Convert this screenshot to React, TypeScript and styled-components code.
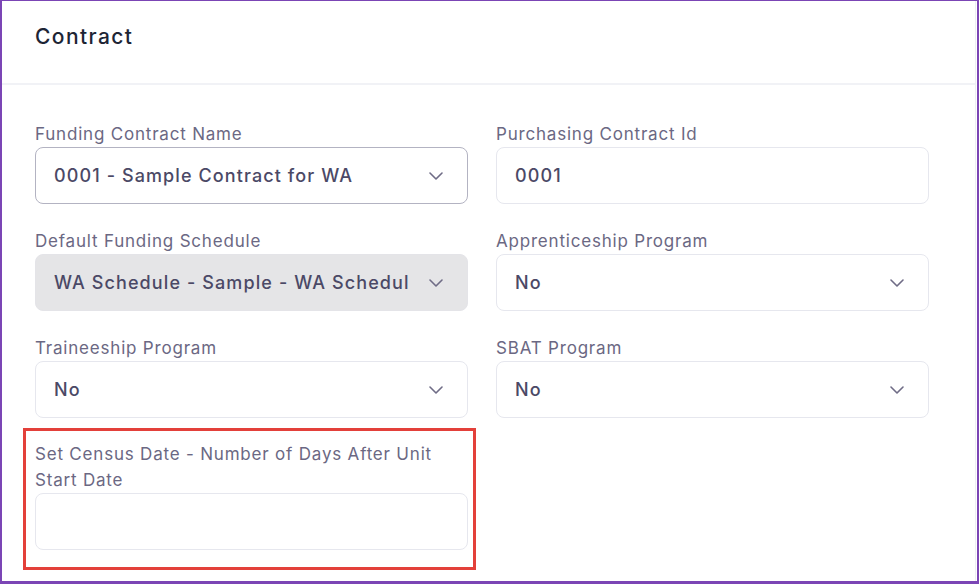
import React from 'react';
import styled, { createGlobalStyle } from 'styled-components';

const GlobalStyle = createGlobalStyle`
  html, body {
    margin: 0;
    padding: 0;
    background: #ffffff;
  }
  body {
    font-family: Inter, "Noto Sans", sans-serif;
  }
`;

const Frame = styled.div`
  box-sizing: border-box;
  width: 979px;
  height: 584px;
  border: 2px solid #7b45b5;
  border-top-width: 1px;
  border-bottom-width: 3px;
  overflow: hidden;
  background: #ffffff;
`;

const Card = styled.div`
  height: 100%;
  border-right: 1px solid #eceef2;
  margin-right: 1px;
`;

const CardHeader = styled.div`
  height: 84px;
  padding: 22px 0 0 33px;
  box-sizing: border-box;
  border-bottom: 2px solid #f1f2f6;
`;

const Title = styled.h2`
  margin: 0;
  font-size: 21px;
  font-weight: 500;
  letter-spacing: 1.4px;
  color: #1d2535;
  line-height: 28px;
`;

const Body = styled.div`
  padding: 34px 0 0 33px;
`;

const Grid = styled.div`
  display: grid;
  grid-template-columns: 433px 433px;
  column-gap: 28px;
  row-gap: 22px;
`;

const Field = styled.div`
  display: flex;
  flex-direction: column;
`;

const Highlight = styled.div`
  margin: -12px 0 0 -12px;
  padding: 8px 5px 17px 9px;
  border: 3px solid #e3403a;
  width: 453px;
  box-sizing: border-box;
`;

const Label = styled.label`
  font-size: 17px;
  letter-spacing: 0.8px;
  line-height: 26px;
  color: #6b6883;
  padding-top: 2px;
`;

const Box = styled.div<{ $disabled?: boolean; $focused?: boolean }>`
  box-sizing: border-box;
  height: 57px;
  border-radius: 8px;
  border: 1px solid ${(p) => (p.$focused ? '#b3b3c2' : p.$disabled ? '#e4e4e8' : '#e6e7ee')};
  background: ${(p) => (p.$disabled ? '#e5e5e7' : '#ffffff')};
  display: flex;
  align-items: center;
  justify-content: space-between;
  padding: 0 24px 0 18px;
`;

const Value = styled.span`
  font-size: 18px;
  font-weight: 500;
  letter-spacing: 1.1px;
  color: #4b4966;
  white-space: nowrap;
  overflow: hidden;
`;

const Chevron = () => (
  <svg width="14" height="8" viewBox="0 0 14 8" fill="none">
    <path d="M1 1l6 6 6-6" stroke="#6f6c86" strokeWidth="1.6" strokeLinecap="round" strokeLinejoin="round" />
  </svg>
);

interface FieldProps {
  label: string;
  value?: string;
  select?: boolean;
  disabled?: boolean;
  focused?: boolean;
}

const FormField: React.FC<FieldProps> = ({ label, value, select, disabled, focused }) => (
  <Field>
    <Label>{label}</Label>
    <Box $disabled={disabled} $focused={focused}>
      <Value>{value}</Value>
      {select && <Chevron />}
    </Box>
  </Field>
);

const App: React.FC = () => {
  return (
    <>
      <GlobalStyle />
      <Frame>
        <Card>
          <CardHeader>
            <Title>Contract</Title>
          </CardHeader>
          <Body>
            <Grid>
              <FormField label="Funding Contract Name" value="0001 - Sample Contract for WA" select focused />
              <FormField label="Purchasing Contract Id" value="0001" />
              <FormField label="Default Funding Schedule" value="WA Schedule - Sample - WA Schedul" select disabled />
              <FormField label="Apprenticeship Program" value="No" select />
              <FormField label="Traineeship Program" value="No" select />
              <FormField label="SBAT Program" value="No" select />
              <Highlight>
                <FormField label="Set Census Date - Number of Days After Unit Start Date" />
              </Highlight>
            </Grid>
          </Body>
        </Card>
      </Frame>
    </>
  );
};

export default App;
